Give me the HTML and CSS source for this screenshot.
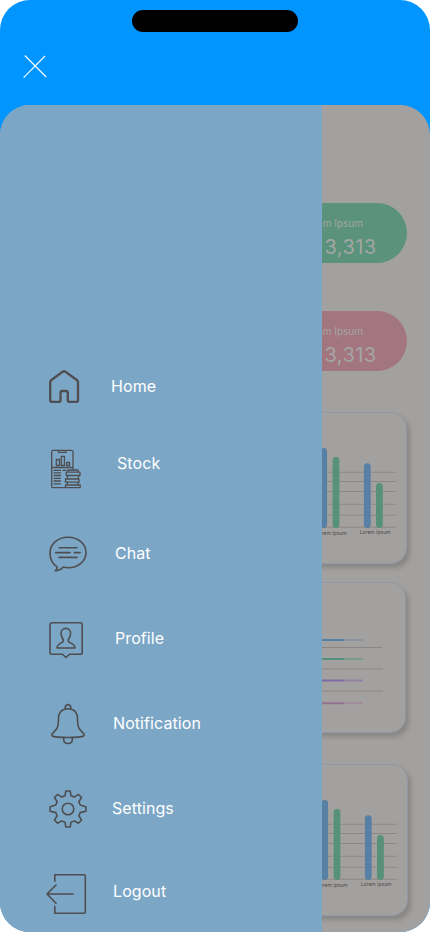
FILE: index.html
```html
<!DOCTYPE html>
<html lang="en">
<head>
<meta charset="utf-8">
<title>Menu</title>
<link rel="stylesheet" href="styles.css">
</head>
<body>
<div class="phone">
  <header class="topbar">
    <div class="island"></div>
    <svg class="close" viewBox="23 55 24 24"><path d="M24.8 55.5 46.2 77M45 56 23.6 77.6"/></svg>
  </header>
  <div class="sheet">
    <main class="dashboard">
      <section class="pill green"><span>Lorem Ipsum</span><strong>3,313</strong></section>
      <section class="pill pink"><span>Lorem Ipsum</span><strong>3,313</strong></section>
      <section class="card bars">
        <svg viewBox="25 413 381 150">
          <path class="grid" d="M60 472.3H396M60 481.5H396M60 491.5H396M60 504.3H396M60 515.3H396M60 527.3H396"/>
          <path class="blue" d="M323.7 451.5V524.5M367.3 466.7V524.5"/>
          <path class="green-line" d="M336 460.5V524.5M379.4 486.5V524.5"/>
          <text x="316" y="535.3">Lorem Ipsum</text><text x="359.8" y="534.4">Lorem Ipsum</text>
        </svg>
      </section>
      <section class="card lines">
        <svg viewBox="25 583 380 149">
          <path class="rule" d="M60 647.5H382"/>
          <path class="rule soft" d="M60 669H383M60 691H383"/>
          <g class="tracks">
            <path stroke="#8c93a5" d="M344 640H363"/><path stroke="#5681a7" d="M60 640H344"/>
            <path stroke="#799b8c" d="M344 659H363"/><path stroke="#4f917a" d="M60 659H344"/>
            <path stroke="#9080a4" d="M344 680.5H363"/><path stroke="#7e6ba5" d="M60 680.5H344"/>
            <path stroke="#a0899e" d="M344 703.2H363"/><path stroke="#94708e" d="M60 703.2H344"/>
          </g>
        </svg>
      </section>
      <section class="card bars last">
        <svg viewBox="24 413 382 150">
          <path class="grid" d="M60 472.3H396M60 481.5H396M60 491.5H396M60 504.3H396M60 515.3H396M60 527.3H396"/>
          <path class="blue" d="M323.7 451.5V524.5M367.3 466.7V524.5"/>
          <path class="green-line" d="M336 460.5V524.5M379.4 486.5V524.5"/>
          <text x="316" y="535.3">Lorem Ipsum</text><text x="359.8" y="534.4">Lorem Ipsum</text>
        </svg>
      </section>
    </main>
    <nav class="drawer">
      <a class="item home">
        <svg viewBox="44 362 48 48"><path stroke-width="2.3" d="M50.2 382Q50.2 381 51 380.3L63 371.5Q64 370.8 65 371.5L77.2 380.3Q78 381 78 382V400.3Q78 401.8 76.5 401.8H69.3Q67.8 401.8 67.8 400.3V392.8Q67.8 391 66 391H62.3Q60.5 391 60.5 392.8V400.3Q60.5 401.8 59 401.8H51.7Q50.2 401.8 50.2 400.3Z"/></svg>
        <span>Home</span>
      </a>
      <a class="item stock">
        <svg viewBox="44 439 48 48"><path stroke-width="1.3" d="M66 487.7H53Q51.7 487.7 51.7 486.4V451.6Q51.7 450.3 53 450.3H71.7Q73 450.3 73 451.6V469.5M58.5 450.5V452.3H66V450.5M52 467.5H73M56.3 465.5V459.5H59.4V465.5ZM61.3 465.5V456.3H64.4V465.5ZM66.6 465.5V462.5H69.6V465.5ZM54 470.4H60.5M54 472.8H60.5M54 475.5H60.5M54 478.3H60.5M54 481H60.5M54 483.8H60.5M63 470.4H66M68 470H78V472.2H68ZM66.2 472.2H80V475.5H66.2ZM67.5 475.5H78.5V479H67.5ZM65.5 479H79V482.2H65.5ZM67.3 482.2H78V485H67.3ZM65.5 485H80.2V487.7H65.5Z"/></svg>
        <span>Stock</span>
      </a>
      <a class="item chat">
        <svg viewBox="44 529 48 48"><path d="M57 566.8C52.7 563.8 50 559 50 553.2C50 544.2 57.6 537.2 68 537.2S86 544 86 552.5S78.4 567.8 68 567.8Q65.5 567.8 63.3 567.1Q60 571 55.2 570.8C57 569.4 57.5 568.3 57 566.8ZM59 547.7H77M55.5 552.6H70M74.3 552.6H80.2M59 557.4H77"/></svg>
        <span>Chat</span>
      </a>
      <a class="item profile">
        <svg viewBox="44 614 48 48"><path d="M52.2 622.8H80Q82.2 622.8 82.2 625V652.5Q82.2 654.2 80.5 654.2H69.7L66 657.5L62.3 654.2H51.7Q50 654.2 50 652.5V625Q50 622.8 52.2 622.8Z"/><path d="M63.2 639.5C61.8 637.5 61 635.4 61 633.3C61 630.4 63 628.4 65.8 628.4S70.6 630.4 70.6 633.3C70.6 635.4 69.8 637.5 68.4 639.5V641.2C68.4 643 75 643.2 75 648H57C57 643.2 63.2 643 63.2 641.2Z"/></svg>
        <span>Profile</span>
      </a>
      <a class="item notification">
        <svg viewBox="44 699 48 48"><path d="M65.3 709C60.8 710.2 58.5 713.8 58.5 718.3C58.5 727.5 57 729.3 53.5 732.4C51.8 733.9 51.4 735.4 52.3 736C56.2 738 79.8 738 83.7 736C84.6 735.4 84.2 733.9 82.5 732.4C79 729.3 77.5 727.5 77.5 718.3C77.5 713.8 75.2 710.2 70.7 709Q68 708.4 65.3 709Z"/><path d="M65.8 708.9A2.7 2.7 0 1 1 70.2 708.9M63.7 737.5V739.5Q63.7 743.5 68 743.5T72.3 739.5V737.5"/></svg>
        <span>Notification</span>
      </a>
      <a class="item settings">
        <svg viewBox="44 784 48 48"><path d="M65.8 791H70.2L71 795.8Q72.7 796.2 74.2 797.1L78.4 794.3L81.6 797.5L78.8 801.7Q79.7 803.2 80.1 804.9L85.9 806.7V811.3L80.1 812.6Q79.7 814.3 78.8 815.8L81.6 820L78.4 823.2L74.2 820.9Q72.7 821.8 71 822.2L70.2 827H65.8L65 822.2Q63.3 821.8 61.8 820.9L57.6 823.2L54.4 820L57.2 815.8Q56.3 814.3 55.9 812.6L50.1 811.3V806.7L55.9 804.9Q56.3 803.2 57.2 801.7L54.4 797.5L57.6 794.3L61.8 797.1Q63.3 796.2 65 795.8Z"/><circle cx="68" cy="809" r="5.8"/></svg>
        <span>Settings</span>
      </a>
      <a class="item logout">
        <svg viewBox="44 867 48 48"><path d="M54.8 881.3V874.8H84.3Q85.3 874.8 85.3 875.8V912.3Q85.3 913.3 84.3 913.3H54.8V906.3M73 894H47M56 885 47 894 56 903.2"/></svg>
        <span>Logout</span>
      </a>
    </nav>
  </div>
</div>
</body>
</html>
```
FILE: styles.css
```css
* { box-sizing: border-box; }
body { margin: 0; background: #fff; font-family: Inter, "Liberation Sans", sans-serif; }
svg { display: block; fill: none; overflow: visible; }

.phone { width: 430px; height: 932px; border-radius: 30px; overflow: hidden; background: #0095ff; }
.topbar { height: 105px; padding-top: 10px; }
.island { width: 166px; height: 22px; margin: 0 auto; border-radius: 11px; background: #000; }
.close { width: 24px; height: 24px; margin: 23px 0 0 23px; stroke: #fff; stroke-width: 1.1; }

.sheet { position: relative; height: 827px; border-radius: 30px 30px 0 0; overflow: hidden; background: #a3a19f; }
.dashboard { padding: 98px 0 0 24px; }

.pill { display: flex; flex-direction: column; align-items: flex-end; width: 383px; height: 60px; border-radius: 30px; color: #a3a6a4; }
.pill span { margin: 14px 44px 0 0; font-size: 10px; line-height: 13px; }
.pill strong { margin: 4px 30.5px 0 0; font-size: 20px; line-height: 26px; font-weight: 400; letter-spacing: .4px; }
.green { background: #5b927b; }
.pink { margin-top: 48px; background: #a3757f; }

.card { width: 383px; height: 152px; border: 1px solid #9298a5; border-radius: 16px; background: #a3a19f; box-shadow: 3px 4px 4px rgba(70, 68, 66, .28); }
.card svg { width: 381px; height: 150px; }
.pink + .card { margin-top: 41px; }
.lines { width: 382px; height: 151px; margin-top: 18px; }
.card.lines svg { width: 380px; height: 149px; }
.last { width: 384px; margin-top: 31px; }
.card.last svg { width: 382px; }

.grid { stroke: #8b8987; stroke-width: 1.1; }
.blue, .green-line { stroke-width: 6.8; stroke-linecap: round; }
.blue { stroke: #5780a4; }
.green-line { stroke: #57917a; }
.bars text { fill: #4e4c4b; font-size: 5px; }
.rule { stroke: #8a8886; stroke-width: 1; }
.rule.soft { stroke: #93918f; stroke-width: 1.6; }
.tracks { stroke-width: 2; }

.drawer { position: absolute; inset: 0 auto 0 0; display: flex; flex-direction: column; width: 322px; padding: 257px 0 0 44px; background: #7ca6c6; }
.item { display: flex; align-items: center; height: 48px; color: #fff; font-size: 16px; line-height: 20px; letter-spacing: .08px; }
.item svg { width: 48px; height: 48px; stroke: #4e4e50; stroke-width: 1.6; stroke-linejoin: round; stroke-linecap: round; }
.item span { margin-left: 21px; }
.home span { margin-left: 19px; }
.stock { margin-top: 29px; }
.stock span { margin-left: 25px; }
.chat { margin-top: 42px; }
.chat span { margin-left: 23px; }
.profile, .notification, .settings { margin-top: 37px; }
.profile span { margin-left: 23px; }
.notification span, .logout span { margin-left: 21px; }
.settings span { margin-left: 20px; }
.logout { margin-top: 35px; }
```
